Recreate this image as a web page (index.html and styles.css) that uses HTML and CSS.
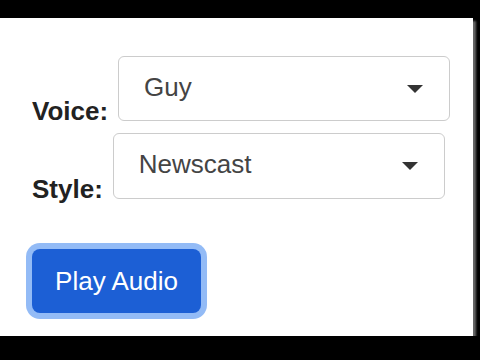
FILE: index.html
```html
<!DOCTYPE html>
<html lang="en">
<head>
<meta charset="UTF-8">
<meta name="viewport" content="width=device-width, initial-scale=1.0">
<title>Text to Speech</title>
<link rel="stylesheet" href="styles.css">
</head>
<body>

<div class="topbar"></div>
<div class="panel">
    <form class="tts-form">
        <div class="row">
            <label for="voice">Voice:</label>
            <div class="select-wrap voice-wrap">
                <select id="voice" name="voice">
                    <option>Guy</option>
                    <option>Jenny</option>
                    <option>Aria</option>
                </select>
            </div>
        </div>
        <div class="row">
            <label for="style">Style:</label>
            <div class="select-wrap">
                <select id="style" name="style">
                    <option>Newscast</option>
                    <option>Cheerful</option>
                    <option>Sad</option>
                </select>
            </div>
        </div>
        <button type="button" class="play-btn">Play Audio</button>
    </form>
</div>

</body>
</html>
```

FILE: styles.css
```css
body {
    margin: 0;
    padding: 0;
    background: #000;
    font-family: "Liberation Sans", Arial, sans-serif;
    overflow: hidden;
}

.topbar {
    height: 18px;
}

.panel {
    width: 473px;
    height: 318px;
    background: #fff;
    box-shadow: 3px 3px 2px #666;
    box-sizing: border-box;
    padding: 38px 0 0 32px;
}

.tts-form {
    display: flex;
    flex-direction: column;
    align-items: flex-start;
}

.row {
    display: flex;
    align-items: flex-end;
    gap: 10px;
    margin-bottom: 12px;
}

.row label {
    font-size: 26px;
    font-weight: bold;
    line-height: 20px;
    color: #222;
}

.select-wrap {
    position: relative;
}

.select-wrap::after {
    content: "";
    position: absolute;
    right: 27px;
    top: 29px;
    border-left: 8px solid transparent;
    border-right: 8px solid transparent;
    border-top: 8px solid #333;
    pointer-events: none;
}

.select-wrap select {
    appearance: none;
    -webkit-appearance: none;
    width: 332px;
    height: 65px;
    padding: 0 0 4px 25px;
    border: 1px solid #ccc;
    border-radius: 6px;
    background: #fff;
    font-family: "Liberation Sans", Arial, sans-serif;
    font-size: 26px;
    color: #444;
}

.row:nth-child(2) select {
    height: 66px;
}

.play-btn {
    margin-top: 38px;
    width: 169px;
    height: 64px;
    padding: 0;
    border: none;
    border-radius: 8px;
    background: #1c5fd5;
    color: #fff;
    font-family: "Liberation Sans", Arial, sans-serif;
    font-size: 26px;
    box-shadow: 0 0 0 6px #93bbf6;
    cursor: pointer;
}
```
